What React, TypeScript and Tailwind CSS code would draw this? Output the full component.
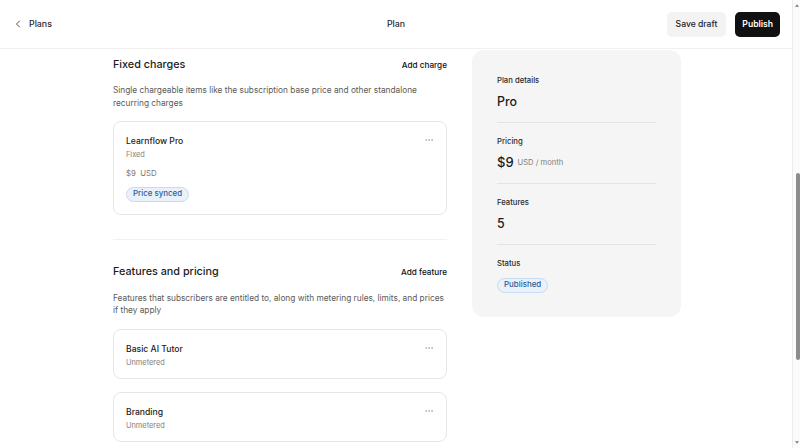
import { ChevronLeft, Ellipsis } from 'lucide-react'

const features = [
  { name: 'Basic AI Tutor', meter: 'Unmetered' },
  { name: 'Branding', meter: 'Unmetered' },
]

function Badge({ label }: { label: string }) {
  return (
    <span className="flex h-[15px] w-fit items-center rounded-full border border-[#c9dbf1] bg-[#e9f1fb] px-[6px] text-[7.9px] leading-none font-medium text-[#2c5d96]">
      {label}
    </span>
  )
}

function MoreButton() {
  return (
    <button className="text-[#9a9a9a]" aria-label="More">
      <Ellipsis className="h-[10px] w-[10px]" strokeWidth={1.6} />
    </button>
  )
}

function SummaryRow({ label, children, last }: { label: string; children: React.ReactNode; last?: boolean }) {
  return (
    <div className={`pt-[12.5px] pb-[12px] ${last ? '' : 'border-b border-[#e4e4e4]'}`}>
      <div className="text-[7.7px] leading-[11px] font-medium text-[#2a2a2a]">{label}</div>
      <div className="mt-[8.5px] flex h-[16px] items-center">{children}</div>
    </div>
  )
}

export default function App() {
  return (
    <div className="flex h-[448px] w-[800px] overflow-hidden bg-white text-[#1c1c1c]" style={{ fontFamily: 'Inter, "Noto Sans", sans-serif' }}>
      <div className="flex w-[792px] flex-col">
        {/* Header */}
        <header className="flex h-[49px] shrink-0 items-center border-b border-[#f0f0f0] px-[12px]">
          <div className="flex flex-1 items-center gap-[5px]">
            <ChevronLeft className="h-[12px] w-[12px] text-[#333]" strokeWidth={1.7} />
            <span className="text-[8.8px] font-medium text-[#2a2a2a]">Plans</span>
          </div>
          <div className="text-[8.8px] font-medium text-[#2a2a2a]">Plan</div>
          <div className="flex flex-1 items-center justify-end gap-[9px]">
            <button className="h-[25px] rounded-[5px] bg-[#f3f3f3] px-[9px] text-[8.6px] font-medium text-[#1f1f1f]">
              Save draft
            </button>
            <button className="h-[25px] rounded-[5px] bg-[#111111] px-[7px] text-[8.6px] font-semibold text-white">
              Publish
            </button>
          </div>
        </header>

        {/* Body */}
        <div className="ml-[113px] flex w-[568px] gap-[25px]">
          <div className="w-[334px] pt-[8px]">
            {/* Fixed charges */}
            <section>
              <div className="flex items-center justify-between">
                <h2 className="text-[10.8px] leading-[16px] font-medium">Fixed charges</h2>
                <button className="text-[8.2px] font-medium text-[#111]">Add charge</button>
              </div>
              <p className="mt-[11px] text-[8.3px] leading-[12.6px] text-[#5a5a5a]">
                Single chargeable items like the subscription base price and other standalone recurring charges
              </p>
              <div className="mt-[11.5px] rounded-[8px] border border-[#e6e6e6] px-[12px] pt-[13px] pb-[12px]">
                <div className="flex items-start justify-between">
                  <div>
                    <div className="text-[8.6px] leading-[13px] font-medium text-[#222]">Learnflow Pro</div>
                    <div className="mt-[1.5px] text-[7.4px] leading-[11px] text-[#808080]">Fixed</div>
                  </div>
                  <MoreButton />
                </div>
                <div className="mt-[6.5px] text-[7.8px] leading-[12px] text-[#7a7a7a]">$9&nbsp; USD</div>
                <div className="mt-[8px] flex">
                  <Badge label="Price synced" />
                </div>
              </div>
            </section>

            <div className="mt-[24.5px] border-t border-[#f1f1f1]" />

            {/* Features and pricing */}
            <section className="mt-[24px]">
              <div className="flex items-center justify-between">
                <h2 className="text-[10.8px] leading-[16px] font-medium">Features and pricing</h2>
                <button className="text-[8.2px] font-medium text-[#111]">Add feature</button>
              </div>
              <p className="mt-[11.5px] text-[8.3px] leading-[12.4px] text-[#5a5a5a]">
                Features that subscribers are entitled to, along with metering rules, limits, and prices if they apply
              </p>
              <div className="mt-[12.5px] flex flex-col gap-[13px]">
                {features.map((f) => (
                  <div key={f.name} className="flex h-[50px] items-start justify-between rounded-[8px] border border-[#e6e6e6] px-[12px] pt-[12.5px]">
                    <div>
                      <div className="text-[8.6px] leading-[13px] font-medium text-[#222]">{f.name}</div>
                      <div className="mt-[1.5px] text-[7.4px] leading-[11px] text-[#808080]">{f.meter}</div>
                    </div>
                    <MoreButton />
                  </div>
                ))}
              </div>
            </section>
          </div>

          {/* Summary panel */}
          <aside className="mt-[1px] h-[267px] w-[209px] rounded-[12px] bg-[#f5f5f5] px-[25px] pt-[12px]">
            <SummaryRow label="Plan details">
              <span className="text-[12.4px] font-medium">Pro</span>
            </SummaryRow>
            <SummaryRow label="Pricing">
              <span className="text-[13px] font-medium">$9</span>
              <span className="ml-[4px] text-[7.6px] text-[#7d7d7d]">USD / month</span>
            </SummaryRow>
            <SummaryRow label="Features">
              <span className="text-[12.4px] font-medium">5</span>
            </SummaryRow>
            <SummaryRow label="Status" last>
              <Badge label="Published" />
            </SummaryRow>
          </aside>
        </div>
      </div>

      {/* Scrollbar */}
      <div className="flex w-[8px] flex-col items-center border-l border-[#ececec] bg-[#fbfbfb]">
        <div className="mt-[4px] h-0 w-0 border-x-[2.5px] border-b-[3px] border-x-transparent border-b-[#8f8f8f]" />
        <div className="mt-[166px] ml-[2px] h-[187px] w-[4px] rounded-full bg-[#8c8c8c]" />
        <div className="mt-auto mb-[4px] h-0 w-0 border-x-[2.5px] border-t-[3px] border-x-transparent border-t-[#8f8f8f]" />
      </div>
    </div>
  )
}
